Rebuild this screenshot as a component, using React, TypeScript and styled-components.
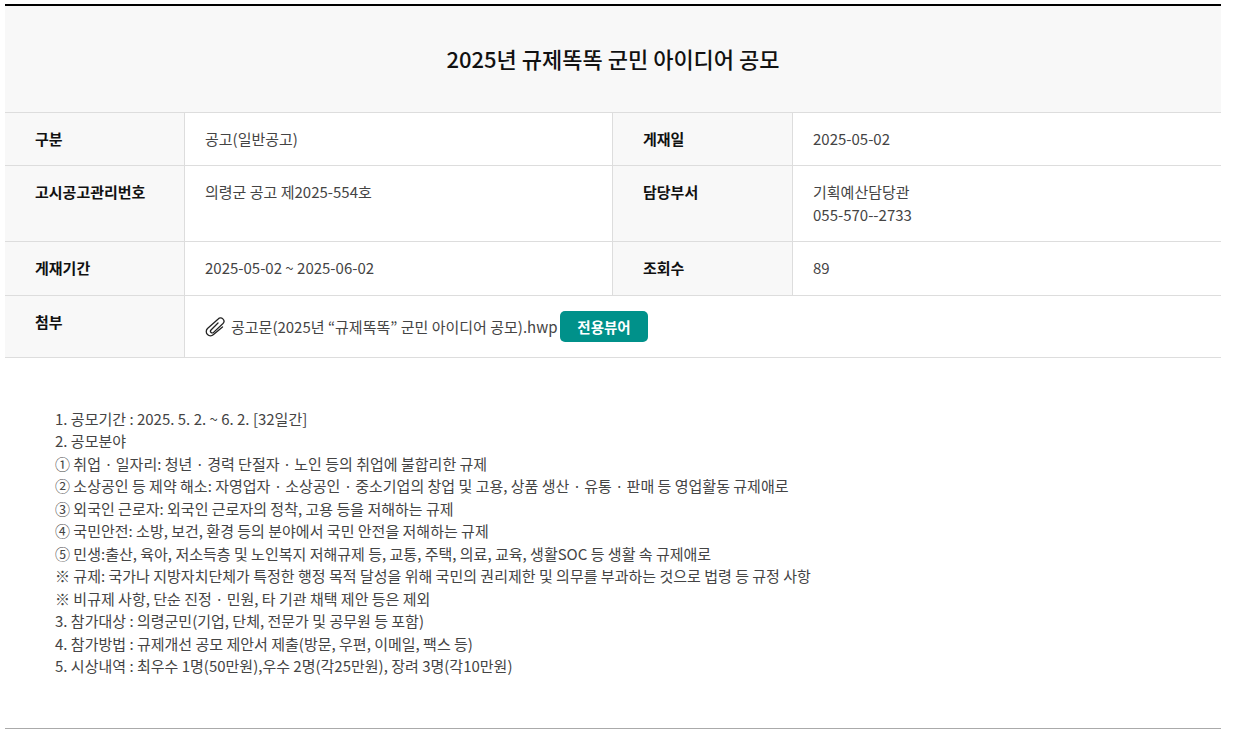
import React from "react";
import styled, { createGlobalStyle } from "styled-components";

const Global = createGlobalStyle`
  html, body { margin: 0; padding: 0; background: #fff; }
  body { font-family: "Noto Sans CJK KR", "Noto Sans", sans-serif; color: #444; }
`;

const Page = styled.div`
  width: 1216px;
  margin-left: 5px;
  padding-top: 4px;
`;

const Board = styled.div`
  border-top: 2px solid #000;
`;

const Title = styled.h1`
  margin: 0;
  height: 107px;
  padding-bottom: 2px;
  box-sizing: border-box;
  display: flex;
  align-items: center;
  justify-content: center;
  background: #f8f8f8;
  border-bottom: 1px solid #ddd;
  font-size: 22px;
  font-weight: 500;
  color: #111;
`;

const Meta = styled.div`
  display: grid;
  grid-template-columns: 180px 427px 181px 428px;
  grid-template-rows: 53px 76px 54px 62px;
`;

const Label = styled.div`
  box-sizing: border-box;
  padding: 14px 0 0 30px;
  background: #f8f8f8;
  border-right: 1px solid #ddd;
  border-bottom: 1px solid #ddd;
  font-size: 15px;
  line-height: 24px;
  font-weight: 700;
  color: #111;
`;

const SideLabel = styled(Label)`
  border-left: 1px solid #ddd;
`;

const Value = styled.div<{ $wide?: boolean }>`
  box-sizing: border-box;
  padding: 14px 0 0 20px;
  border-bottom: 1px solid #ddd;
  font-size: 15px;
  line-height: 24px;
  color: #444;
  ${(p) => (p.$wide ? "grid-column: span 3;" : "")}
`;

const Contact = styled.span`
  display: block;
  margin-top: -1px;
`;

const FileRow = styled.div`
  display: flex;
  align-items: center;
  margin-top: 1px;
`;

const Clip = styled.svg`
  width: 20px;
  height: 20px;
  margin-right: 6px;
  flex: none;
`;

const ViewerButton = styled.span`
  display: inline-flex;
  align-items: center;
  justify-content: center;
  width: 88px;
  height: 31px;
  margin-left: 2.5px;
  border-radius: 5px;
  background: #00918a;
  color: #fff;
  font-size: 14.5px;
  font-weight: 700;
`;

const Body = styled.div`
  padding: 49.5px 0 50.5px 50px;
  border-bottom: 1px solid #aaa;
  font-size: 15px;
  line-height: 22.5px;
  color: #444;
`;

const Dot = styled.span`
  padding: 0 0.5px;
`;

const lines = [
  "1. 공모기간 : 2025. 5. 2. ~ 6. 2. [32일간]",
  "2. 공모분야",
  "① 취업ㆍ일자리: 청년ㆍ경력 단절자ㆍ노인 등의 취업에 불합리한 규제",
  "② 소상공인 등 제약 해소: 자영업자ㆍ소상공인ㆍ중소기업의 창업 및 고용, 상품 생산ㆍ유통ㆍ판매 등 영업활동 규제애로",
  "③ 외국인 근로자: 외국인 근로자의 정착, 고용 등을 저해하는 규제",
  "④ 국민안전: 소방, 보건, 환경 등의 분야에서 국민 안전을 저해하는 규제",
  "⑤ 민생:출산, 육아, 저소득층 및 노인복지 저해규제 등, 교통, 주택, 의료, 교육, 생활SOC 등 생활 속 규제애로",
  "※ 규제: 국가나 지방자치단체가 특정한 행정 목적 달성을 위해 국민의 권리제한 및 의무를 부과하는 것으로 법령 등 규정 사항",
  "※ 비규제 사항, 단순 진정ㆍ민원, 타 기관 채택 제안 등은 제외",
  "3. 참가대상 : 의령군민(기업, 단체, 전문가 및 공무원 등 포함)",
  "4. 참가방법 : 규제개선 공모 제안서 제출(방문, 우편, 이메일, 팩스 등)",
  "5. 시상내역 : 최우수 1명(50만원),우수 2명(각25만원), 장려 3명(각10만원)",
];

function Line({ text }: { text: string }) {
  const parts = text.split("ㆍ");
  return (
    <div>
      {parts.map((part, i) => (
        <React.Fragment key={i}>
          {i > 0 && <Dot>ㆍ</Dot>}
          {part}
        </React.Fragment>
      ))}
    </div>
  );
}

export default function App() {
  return (
    <Page>
      <Global />
      <Board>
        <Title>2025년 규제똑똑 군민 아이디어 공모</Title>
        <Meta>
          <Label>구분</Label>
          <Value>공고(일반공고)</Value>
          <SideLabel>게재일</SideLabel>
          <Value>2025-05-02</Value>
          <Label>고시공고관리번호</Label>
          <Value>의령군 공고 제2025-554호</Value>
          <SideLabel>담당부서</SideLabel>
          <Value>기획예산담당관<Contact>055-570--2733</Contact></Value>
          <Label>게재기간</Label>
          <Value>2025-05-02 ~ 2025-06-02</Value>
          <SideLabel>조회수</SideLabel>
          <Value>89</Value>
          <Label>첨부</Label>
          <Value $wide>
            <FileRow>
              <Clip viewBox="3 2 20 20" fill="none" stroke="#222" strokeWidth="1.3" strokeLinecap="round" strokeLinejoin="round">
                <path d="M16 8 9 15a1.7 1.7 0 0 0 2.6 2.4L21 8.5a3.2 3.2 0 0 0-4.8-4.5L5.5 13.5a4.2 4.2 0 0 0 6 6L20.5 12" />
              </Clip>
              공고문(2025년 “규제똑똑” 군민 아이디어 공모).hwp
              <ViewerButton>전용뷰어</ViewerButton>
            </FileRow>
          </Value>
        </Meta>
      </Board>
      <Body>
        {lines.map((l) => (
          <Line key={l} text={l} />
        ))}
      </Body>
    </Page>
  );
}
